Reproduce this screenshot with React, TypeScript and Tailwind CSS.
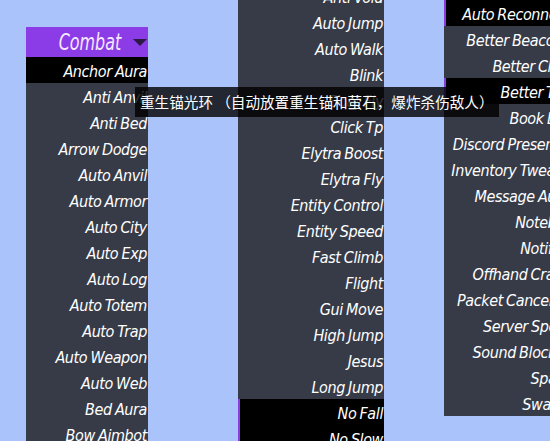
import React from "react";

type Mod = { name: string; on?: boolean; bar?: boolean };

const combat: Mod[] = [
  { name: "Anchor Aura", on: true },
  { name: "Anti Anvil" },
  { name: "Anti Bed" },
  { name: "Arrow Dodge" },
  { name: "Auto Anvil" },
  { name: "Auto Armor" },
  { name: "Auto City" },
  { name: "Auto Exp" },
  { name: "Auto Log" },
  { name: "Auto Totem" },
  { name: "Auto Trap" },
  { name: "Auto Weapon" },
  { name: "Auto Web" },
  { name: "Bed Aura" },
  { name: "Bow Aimbot" },
  { name: "Burrow" },
];

const movement: Mod[] = [
  { name: "Anti Void" },
  { name: "Auto Jump" },
  { name: "Auto Walk" },
  { name: "Blink" },
  { name: "Boat Fly" },
  { name: "Click Tp" },
  { name: "Elytra Boost" },
  { name: "Elytra Fly" },
  { name: "Entity Control" },
  { name: "Entity Speed" },
  { name: "Fast Climb" },
  { name: "Flight" },
  { name: "Gui Move" },
  { name: "High Jump" },
  { name: "Jesus" },
  { name: "Long Jump" },
  { name: "No Fall", on: true, bar: true },
  { name: "No Slow", on: true, bar: true },
];

const misc: Mod[] = [
  { name: "Auto Reconnect", on: true, bar: true },
  { name: "Better Beacons" },
  { name: "Better Chat" },
  { name: "Better Tab", on: true, bar: true },
  { name: "Book Bot" },
  { name: "Discord Presence" },
  { name: "Inventory Tweaks" },
  { name: "Message Aura" },
  { name: "Notebot" },
  { name: "Notifier" },
  { name: "Offhand Crash" },
  { name: "Packet Canceller" },
  { name: "Server Spoof" },
  { name: "Sound Blocker" },
  { name: "Spam" },
  { name: "Swarm" },
];

const rowFont = {
  fontFamily: '"DejaVu Sans Condensed", "DejaVu Sans", sans-serif',
};

function Row({ mod }: { mod: Mod }) {
  return (
    <div
      className={`relative h-[26px] pr-[1px] pt-[3px] text-right text-[16px] leading-[23px] italic tracking-[-0.4px] text-white whitespace-nowrap [word-spacing:-1px] [font-stretch:condensed] ${
        mod.on ? "bg-black" : ""
      }`}
      style={rowFont}
    >
      {mod.bar && <div className="absolute left-0 top-0 h-full w-[2px] bg-[#8b3ce6]" />}
      {mod.name}
    </div>
  );
}

export default function App() {
  return (
    <div className="relative flex h-[441px] w-[550px] items-start overflow-hidden bg-[#aac4fb]">
      <div className="ml-[26px] mt-[27px] w-[122px] shrink-0 bg-[#373b48]">
        <div className="flex h-[30px] items-center justify-end gap-[12px] overflow-hidden bg-[#8b3ce6] pr-[1px]">
          <span
            className="inline-block origin-right scale-x-[0.77] text-[23px] italic leading-none text-[#f6e8ff]"
            style={rowFont}
          >
            Combat
          </span>
          <svg width="14" height="7" viewBox="0 0 14 7" className="mt-[1px] shrink-0">
            <polygon points="0,0 14,0 7,7" fill="#2a1a44" />
          </svg>
        </div>
        {combat.map((m) => (
          <Row key={m.name} mod={m} />
        ))}
      </div>

      <div className="ml-[90px] mt-[-17px] w-[146px] shrink-0 bg-[#373b48]">
        {movement.map((m) => (
          <Row key={m.name} mod={m} />
        ))}
      </div>

      <div className="ml-[60px] mt-0 w-[127px] shrink-0 bg-[#373b48]">
        {misc.map((m) => (
          <Row key={m.name} mod={m} />
        ))}
      </div>

      <div
        className="absolute left-[135px] top-[87px] flex h-[30px] items-center bg-black/80 pl-[5px] pr-[5px] text-[14.6px] text-white whitespace-nowrap"
        style={{ fontFamily: '"Noto Sans CJK SC", "Noto Sans", sans-serif' }}
      >
        重生锚光环 （自动放置重生锚和萤石，爆炸杀伤敌人）
      </div>
    </div>
  );
}
